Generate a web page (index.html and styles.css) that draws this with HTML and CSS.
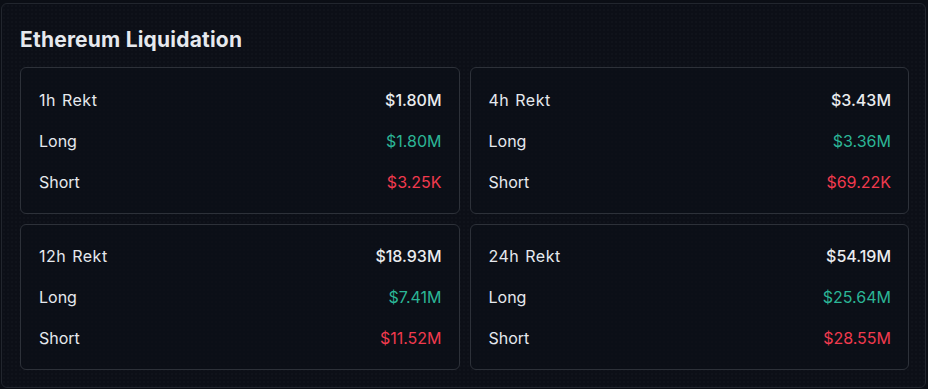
FILE: index.html
```html
<!DOCTYPE html>
<html>
<head>
<meta charset="utf-8">
<link rel="stylesheet" href="styles.css">
</head>
<body>
<section class="panel">
  <h2 class="title">Ethereum Liquidation</h2>
  <div class="grid">
    <div class="card">
      <div class="row"><span class="label period">1h Rekt</span><span class="val total">$1.80M</span></div>
      <div class="row"><span class="label">Long</span><span class="val long">$1.80M</span></div>
      <div class="row"><span class="label">Short</span><span class="val short">$3.25K</span></div>
    </div>
    <div class="card">
      <div class="row"><span class="label period">4h Rekt</span><span class="val total">$3.43M</span></div>
      <div class="row"><span class="label">Long</span><span class="val long">$3.36M</span></div>
      <div class="row"><span class="label">Short</span><span class="val short">$69.22K</span></div>
    </div>
    <div class="card">
      <div class="row"><span class="label period">12h Rekt</span><span class="val total">$18.93M</span></div>
      <div class="row"><span class="label">Long</span><span class="val long">$7.41M</span></div>
      <div class="row"><span class="label">Short</span><span class="val short">$11.52M</span></div>
    </div>
    <div class="card">
      <div class="row"><span class="label period">24h Rekt</span><span class="val total">$54.19M</span></div>
      <div class="row"><span class="label">Long</span><span class="val long">$25.64M</span></div>
      <div class="row"><span class="label">Short</span><span class="val short">$28.55M</span></div>
    </div>
  </div>
</section>
</body>
</html>
```
FILE: styles.css
```css
html, body {
  margin: 0;
  padding: 0;
  background: #0b0e15;
}
body {
  width: 928px;
  height: 389px;
  overflow: hidden;
  font-family: Inter, "Noto Sans", sans-serif;
  color: #eaecef;
}
.panel {
  box-sizing: border-box;
  margin: 3px 2px 0 1px;
  width: 925px;
  height: 385px;
  border: 1px solid #22262e;
  border-radius: 6px;
  padding: 0 16px 17px 18px;
  background-color: #0c0f17;
  background-image: radial-gradient(rgba(255,255,255,0.035) 0.6px, transparent 0.8px);
  background-size: 4px 4px;
  display: flex;
  flex-direction: column;
}
.title {
  margin: 0;
  height: 64px;
  display: flex;
  align-items: center;
  padding-top: 8px;
  box-sizing: border-box;
  font-size: 21px;
  font-weight: 700;
  color: #e6e9ee;
  letter-spacing: 0.2px;
}
.grid {
  display: grid;
  grid-template-columns: 1fr 1fr;
  grid-template-rows: 147px 146px;
  gap: 10px;
}
.card {
  border: 1px solid #2d3139;
  border-radius: 6px;
  padding: 11px 17px 11px 18px;
  display: flex;
  flex-direction: column;
  background: rgba(12, 15, 23, 0.6);
}
.row {
  height: 41px;
  display: flex;
  align-items: center;
  justify-content: space-between;
  font-size: 16px;
}
.label {
  color: #e6e9ee;
  font-weight: 400;
}
.period {
  letter-spacing: 0.5px;
  word-spacing: 1px;
}
.val {
  font-weight: 400;
}
.total { color: #eaecef; font-weight: 500; }
.long { color: #2bb596; }
.short { color: #f03a4e; }
```
